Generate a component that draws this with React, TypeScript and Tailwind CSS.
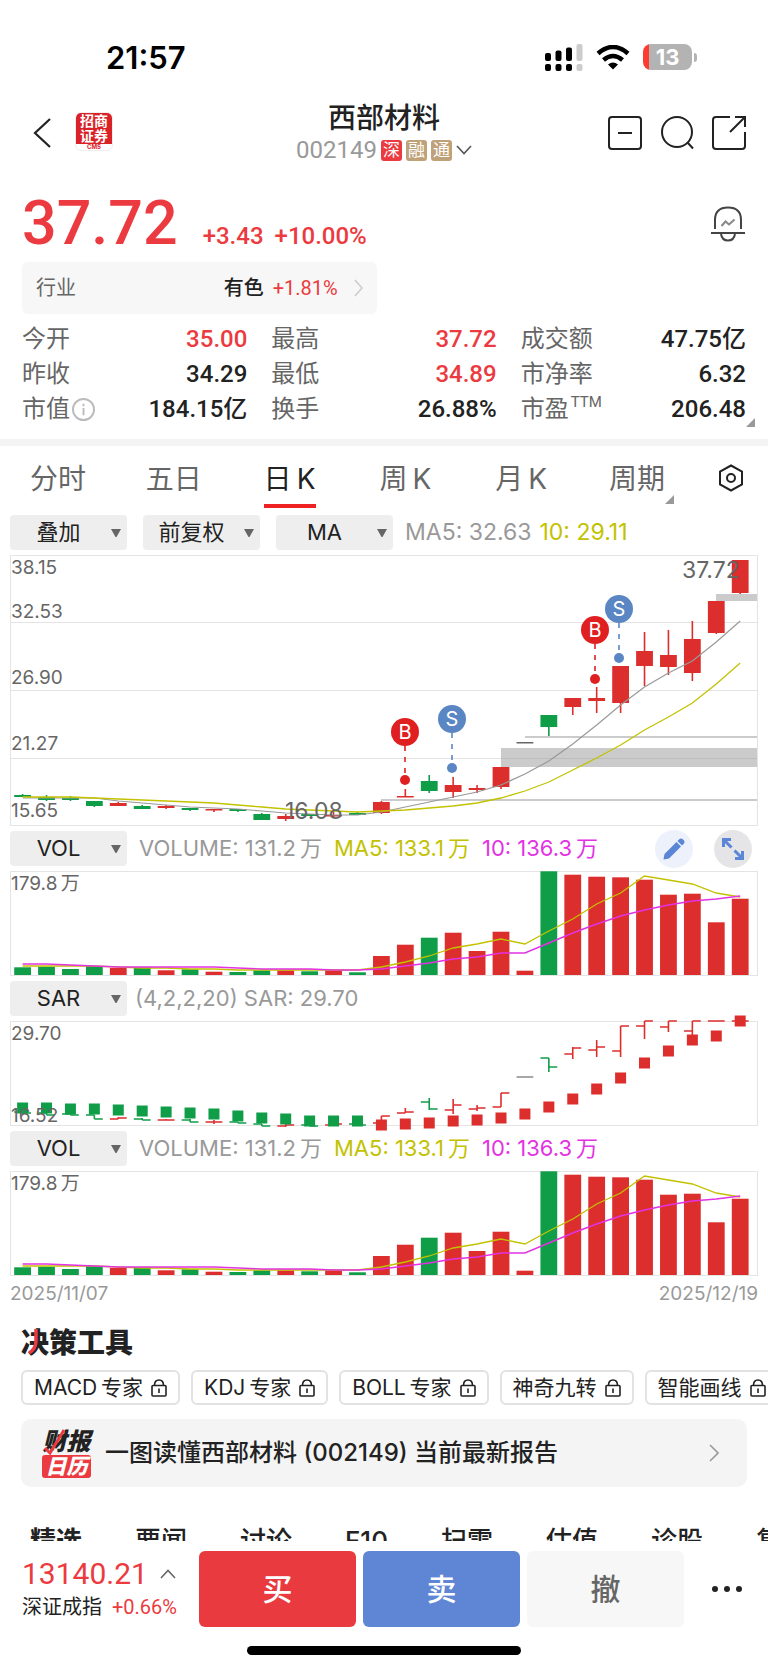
import { useState } from 'react';

const RED = '#dd2e2e';
const GREEN = '#0f9d48';
const GRAY = '#8a8a8a';
const OLIVE = '#c2c200';
const PURPLE = '#e332e3';

// x centre of the i-th trading day
const cx = (i: number) => 12.6 + i * 23.92;
const toPoints = (ys: number[]) => ys.map((y, i) => `${cx(i)},${y}`).join(' ');

// [up, high, bodyTop, bodyBottom, low]
const candles: [boolean, number, number, number, number][] = [
  [false, 239, 240, 242, 242],
  [false, 240, 242, 245, 246],
  [false, 241, 243, 245, 246],
  [false, 246, 246, 251, 252],
  [true, 247, 248, 251, 251],
  [false, 250, 251, 254, 254],
  [true, 250, 251, 253, 254],
  [false, 253, 253, 255, 256],
  [true, 254, 254, 255, 257],
  [false, 254, 254, 256, 257],
  [false, 258, 259, 265, 265],
  [true, 259, 261, 264, 266],
  [false, 259, 259, 261, 261],
  [true, 257, 260, 261, 262],
  [false, 257, 258, 260, 260],
  [true, 246, 247, 258, 259],
  [true, 234, 241, 242, 242],
  [false, 220, 226, 236, 238],
  [true, 222, 230, 237, 243],
  [true, 230, 233, 235, 238],
  [true, 212, 212, 232, 234],
  [true, 187, 187, 188, 188],
  [false, 160, 160, 172, 181],
  [true, 143, 143, 152, 160],
  [true, 132, 143, 146, 158],
  [true, 111, 111, 148, 158],
  [true, 77, 96, 111, 131],
  [true, 75, 100, 112, 120],
  [true, 66, 84, 118, 126],
  [true, 46, 46, 78, 79],
  [true, 5, 5, 38, 39],
];

const ma5 = [243, 243, 243, 243, 246, 248, 250, 252, 253, 254, 256, 258, 259, 260, 260, 257, 252, 247, 242, 237, 230, 219, 206, 189, 170, 150, 132, 118, 106, 87, 66];
const ma10 = [242, 242, 242, 243, 244, 245, 246, 247, 248, 250, 252, 254, 255, 256, 257, 256, 255, 253, 251, 248, 243, 236, 227, 215, 203, 190, 175, 162, 148, 129, 108];

const volumes = [7.7, 8.3, 6, 9, 7, 7.7, 4.7, 5.7, 3.3, 3, 4.7, 4.7, 3.7, 4.7, 2.7, 19, 30.3, 37.3, 42.3, 24, 43.3, 4.3, 103.7, 100.3, 98.3, 97.7, 95.3, 80.3, 81.3, 52.7, 76.3];
const vol5 = [95, 95, 95, 95, 96, 97, 97, 98, 98, 99, 99, 99, 99, 99, 99, 96, 91, 85, 77, 73, 68, 73, 60, 48, 33, 22, 5, 9, 13, 22, 26];
const vol10 = [93, 93, 94, 95, 96, 96, 96, 96, 96, 97, 98, 98, 98, 99, 99, 98, 95, 92, 88, 86, 82, 82, 72, 62, 53, 45, 39, 34, 30, 28, 25];

// [high, open, close, low]
const bars: [number, number, number, number][] = [
  [91, 91, 92, 93],
  [91, 92, 94, 94],
  [92, 93, 94, 94],
  [94, 94, 98, 98],
  [96, 98, 97, 98],
  [97, 98, 99, 99],
  [98, 99, 99, 99],
  [98, 99, 101, 101],
  [99, 101, 101, 103],
  [101, 101, 102, 102],
  [103, 103, 105, 105],
  [103, 105, 104, 106],
  [103, 104, 105, 105],
  [102, 104, 103, 105],
  [102, 103, 104, 104],
  [95, 102, 95, 102],
  [87, 92, 91, 92],
  [77, 81, 88, 89],
  [78, 89, 84, 93],
  [84, 88, 87, 90],
  [72, 86, 72, 86],
  [56, 56, 56, 56],
  [37, 37, 46, 51],
  [26, 33, 27, 38],
  [19, 29, 26, 36],
  [5, 30, 5, 36],
  [0, 5, 0, 18],
  [0, 6, 0, 11],
  [0, 10, 0, 17],
  [0, 0, 0, 0],
  [0, 0, 0, 0],
];
const sar = [87, 87, 88, 88, 89, 90, 91, 92, 93, 95, 97, 98, 100, 100, 100, 104, 103, 102, 100, 99, 97, 93, 86, 78, 68, 57, 42, 30, 19, 15, 0];

const markers = [
  { label: 'B', x: 395, y: 177, dot: 225, color: '#e02020' },
  { label: 'S', x: 442, y: 164, dot: 213, color: '#5b86c4' },
  { label: 'B', x: 585, y: 75, dot: 124, color: '#e02020' },
  { label: 'S', x: 609, y: 54, dot: 103, color: '#5b86c4' },
];

const Frame = ({ height }: { height: number }) => (
  <rect x="0.5" y="0.5" width="747" height={height - 1} fill="none" stroke="#e4e4e4" />
);

function CandleChart() {
  return (
    <svg viewBox="0 0 748 271" className="block w-full overflow-visible" role="img" aria-label="日K线">
      <Frame height={271} />
      {[67.5, 135.5, 203.5].map((y) => (
        <line key={y} x1="0" x2="748" y1={y} y2={y} stroke="#e4e4e4" />
      ))}
      <g fill="#cbcbcb">
        <rect x="371" y="244" width="376" height="2" />
        <rect x="491" y="193" width="256" height="19" />
        <rect x="515" y="181" width="232" height="2" />
        <rect x="706" y="39" width="41" height="7" />
      </g>
      <line x1="491" x2="747" y1="203.5" y2="203.5" stroke="#bdbdbd" />
      {candles.map(([up, high, top, bottom, low], i) => {
        const color = i === 21 ? '#666666' : up ? RED : GREEN;
        return (
          <g key={i} fill={color}>
            <rect x={cx(i) - 0.8} y={high} width="1.6" height={low - high} />
            <rect x={cx(i) - 8.4} y={top} width="16.8" height={Math.max(bottom - top, 1.5)} />
          </g>
        );
      })}
      <polyline points={toPoints(ma5)} fill="none" stroke="#999999" strokeWidth="1.2" />
      <polyline points={toPoints(ma10)} fill="none" stroke={OLIVE} strokeWidth="1.3" />
      {markers.map((m) => (
        <g key={m.x}>
          <line x1={m.x} x2={m.x} y1={m.y + 14} y2={m.dot} stroke={m.color} strokeWidth="1.6" strokeDasharray="5 6" />
          <circle cx={m.x} cy={m.y} r="14" fill={m.color} />
          <circle cx={m.x} cy={m.dot} r="5" fill={m.color} />
          <text x={m.x} y={m.y + 7} textAnchor="middle" className="text-[20px]" fill="#ffffff">{m.label}</text>
        </g>
      ))}
      <g fill="#666666" className="text-[19px]">
        <text x="1" y="19">38.15</text>
        <text x="1" y="63">32.53</text>
        <text x="1" y="129">26.90</text>
        <text x="1" y="195">21.27</text>
        <text x="1" y="262">15.65</text>
      </g>
      <g fill="#666666" className="text-[23px]">
        <text x="275" y="264">16.08</text>
        <text x="672" y="23">37.72</text>
      </g>
    </svg>
  );
}

function VolumeChart() {
  return (
    <svg viewBox="0 0 748 105" className="block w-full overflow-visible" role="img" aria-label="成交量">
      <Frame height={105} />
      {volumes.map((v, i) => (
        <rect key={i} x={cx(i) - 8.4} y={104 - v} width="16.8" height={v} fill={candles[i][0] ? RED : GREEN} />
      ))}
      <polyline points={toPoints(vol5)} fill="none" stroke={OLIVE} strokeWidth="1.3" />
      <polyline points={toPoints(vol10)} fill="none" stroke={PURPLE} strokeWidth="1.4" />
      <text x="1" y="19" fill="#666666" className="text-[19px]">179.8{'\u2009'}万</text>
    </svg>
  );
}

function SarChart() {
  return (
    <svg viewBox="0 0 748 105" className="block w-full overflow-visible" role="img" aria-label="SAR">
      <Frame height={105} />
      {bars.map(([high, open, close, low], i) => {
        const color = i === 21 ? GRAY : candles[i][0] ? RED : GREEN;
        const x = cx(i);
        return (
          <path
            key={i}
            d={`M${x - 8.4} ${open}H${x} M${x} ${high}V${low} M${x} ${close}H${x + 8.4}`}
            stroke={color}
            strokeWidth="1.6"
            fill="none"
          />
        );
      })}
      {sar.map((y, i) => (
        <rect key={i} x={cx(i) - 5.5} y={y - 5.5} width="11" height="11" fill={i < 15 ? GREEN : RED} />
      ))}
      <g fill="#666666" className="text-[19px]">
        <text x="1" y="19">29.70</text>
        <text x="1" y="101">16.52</text>
      </g>
    </svg>
  );
}

function Picker({ label, options }: { label: string; options: string[] }) {
  return (
    <div className="relative h-[35px] w-[117px] shrink-0">
      <select
        aria-label={label}
        className="h-full w-full appearance-none rounded-[4px] bg-[#eeeeee] pr-5 text-[22px] text-[#222222] outline-none [text-align-last:center]"
      >
        {options.map((o) => (
          <option key={o}>{o}</option>
        ))}
      </select>
      <svg viewBox="0 0 10 8" className="pointer-events-none absolute top-[14px] right-[6px] w-[10px]">
        <path d="M0 0H10L5.8 7.4Q5 8.4 4.2 7.4Z" fill="#666666" />
      </svg>
    </div>
  );
}

function VolumeHeader({ tools }: { tools?: boolean }) {
  return (
    <div className="flex h-[45px] items-center gap-3 text-[22px] whitespace-nowrap">
      <Picker label="指标" options={['VOL', 'MACD', 'KDJ', 'SAR']} />
      <span className="text-[#999999]">VOLUME: 131.2{'\u2009'}万</span>
      <span className="text-[#c2c200]">MA5: 133.1{'\u2009'}万</span>
      <span className="text-[#e332e3]">10: 136.3{'\u2009'}万</span>
      {tools && (
        <div className="mr-[6px] ml-auto flex gap-[21px]">
          <button aria-label="画线" className="flex size-[38px] items-center justify-center rounded-full bg-[#ecf1fb]">
            <svg viewBox="0 0 22 22" className="w-[22px]" fill="#5b85d6">
              <path d="M0.5 21.5L1.5 16L13.5 4L18 8.5L6 20.5Z" />
              <path d="M14.5 3L16.5 1Q18 0 19.5 1L21 2.5Q22 4 21 5.5L19 7.5Z" />
            </svg>
          </button>
          <button aria-label="全屏" className="flex size-[38px] items-center justify-center rounded-full bg-[#e5e5e7]">
            <svg viewBox="0 0 22 22" className="w-[22px]">
              <path d="M1.5 9V1.5H9M2.5 2.5L9.5 9.5M20.5 13V20.5H13M19.5 19.5L12.5 12.5" stroke="#5b85d6" strokeWidth="3" fill="none" />
            </svg>
          </button>
        </div>
      )}
    </div>
  );
}

function Corner() {
  return (
    <svg viewBox="0 0 9 9" className="absolute right-[-9px] bottom-0 w-[9px]">
      <path d="M9 0V9H0Z" fill="#999999" />
    </svg>
  );
}

function LockIcon() {
  return (
    <svg viewBox="0 0 16 18" className="w-4" fill="none" stroke="#222222" strokeWidth="1.6">
      <rect x="1" y="6.5" width="14" height="10.5" rx="1" />
      <path d="M3.5 6.5Q3.5 1 8 1T12.5 6.5M8 9.5V14" />
    </svg>
  );
}

const quotes = [
  { label: '今开', value: '35.00', up: true },
  { label: '最高', value: '37.72', up: true },
  { label: '成交额', value: '47.75亿' },
  { label: '昨收', value: '34.29' },
  { label: '最低', value: '34.89', up: true },
  { label: '市净率', value: '6.32' },
  { label: '市值', value: '184.15亿', info: true },
  { label: '换手', value: '26.88%' },
  { label: '市盈', value: '206.48', ttm: true },
];

const periods = ['分时', '五日', '日\u2009K', '周\u2009K', '月\u2009K', '周期'];
const experts = ['MACD\u2009专家', 'KDJ\u2009专家', 'BOLL\u2009专家', '神奇九转', '智能画线'];
const sections = ['精选', '要闻', '讨论', 'F10', '扫雷', '估值', '诊股', '复盘'];

export default function App() {
  const [period, setPeriod] = useState(periods[2]);

  return (
    <div className="w-full overflow-hidden bg-white font-['Inter','Noto_Sans_CJK_SC',sans-serif] text-[#222222]">
      {/* Status bar */}
      <div className="flex h-[78px] items-center justify-between pt-9 pr-[71px] pl-[106px]">
        <span className="text-[31px] leading-none font-semibold text-black">21:57</span>
        <div className="flex items-center gap-[13px]">
          <svg viewBox="0 0 38 27" className="w-[38px]">
            <rect x="0" y="9" width="6" height="8" rx="2" />
            <rect x="10.5" y="6.5" width="6" height="10.5" rx="2" />
            <rect x="21" y="3.5" width="6" height="13.5" rx="2" />
            <rect x="31.5" y="0" width="6" height="17" rx="2" fill="#cccccc" />
            <rect x="0" y="20" width="6" height="7" rx="2" />
            <rect x="10.5" y="20" width="6" height="7" rx="2" />
            <rect x="21" y="20" width="6" height="7" rx="2" />
            <rect x="31.5" y="20" width="6" height="7" rx="2" fill="#cccccc" />
          </svg>
          <svg viewBox="0 0 34 25" className="w-[34px]">
            <path d="M2 8.5Q17 -4.5 32 8.5M7.5 15Q17 7 26.5 15" fill="none" stroke="#000000" strokeWidth="4.5" />
            <path d="M12 19.5Q17 15.5 22 19.5L17 24.5Z" />
          </svg>
          <div className="flex items-center">
            <div className="flex h-[26px] w-[49px] items-center justify-center rounded-[8px] bg-linear-to-r from-[#ff3b30] from-13% to-[#b3b3b3] to-13% text-[22px] leading-none font-bold text-white">
              13
            </div>
            <div className="ml-[2px] h-[9px] w-[3px] rounded-r-full bg-[#b3b3b3]" />
          </div>
        </div>
      </div>

      {/* Title bar */}
      <header className="grid h-[110px] grid-cols-[1fr_auto_1fr] items-center px-[22px]">
        <div className="flex items-center gap-6 pl-[11px]">
          <button aria-label="返回">
            <svg viewBox="0 0 18 30" className="w-[18px]" fill="none" stroke="#222222" strokeWidth="2.2">
              <path d="M17 1L2 15L17 29" />
            </svg>
          </button>
          <div className="mb-1 flex h-[39px] w-[38px] flex-col items-center overflow-hidden rounded-[6px] border border-[#eeeeee] bg-white text-center">
            <div className="h-[31px] w-full bg-[#da2127] text-[14px] leading-[15px] font-bold text-white">
              招商
              <br />
              证券
            </div>
            <div className="text-[6px] leading-[6px] font-bold text-[#da2127]">CMS</div>
          </div>
        </div>
        <div className="flex flex-col items-center">
          <h1 className="pt-[2px] text-[28px] leading-[32px] font-medium">西部材料</h1>
          <button className="flex h-8 items-center gap-1">
            <span className="font-['Roboto',sans-serif] text-[24px] text-[#999999]">002149</span>
            <span className="rounded-[3px] bg-[#eb3b40] px-[2px] text-[17px] leading-[21px] text-white">深</span>
            <span className="rounded-[3px] bg-[#bfa279] px-[2px] text-[17px] leading-[21px] text-white">融</span>
            <span className="rounded-[3px] bg-[#bfa279] px-[2px] text-[17px] leading-[21px] text-white">通</span>
            <svg viewBox="0 0 16 10" className="w-4" fill="none" stroke="#555555" strokeWidth="1.6">
              <path d="M1 1L8 8.5L15 1" />
            </svg>
          </button>
        </div>
        <div className="flex items-center justify-end gap-[18px]">
          <button aria-label="减自选">
            <svg viewBox="0 0 34 34" className="w-[34px]" fill="none" stroke="#222222" strokeWidth="2">
              <rect x="1" y="1" width="32" height="32" rx="3" />
              <path d="M10 17H24" />
            </svg>
          </button>
          <button aria-label="搜索">
            <svg viewBox="0 0 34 34" className="w-[34px]" fill="none" stroke="#222222" strokeWidth="2">
              <circle cx="17" cy="16" r="15" />
              <path d="M27.5 26.5L33 32.5" />
            </svg>
          </button>
          <button aria-label="分享">
            <svg viewBox="0 0 34 34" className="w-[34px]" fill="none" stroke="#222222" strokeWidth="2">
              <path d="M18 1H4Q1 1 1 4V30Q1 33 4 33H30Q33 33 33 30V16M23 1H33V11M33 1L18 16" />
            </svg>
          </button>
        </div>
      </header>

      {/* Price */}
      <section className="px-[22px]">
        <div className="flex h-[74px] items-start justify-between">
          <div className="flex items-baseline font-['Roboto',sans-serif] font-medium text-[#eb3b40]">
            <span className="text-[61px] leading-[70px]">37.72</span>
            <span className="ml-[25px] text-[24px]">+3.43</span>
            <span className="ml-[11px] text-[24px]">+10.00%</span>
          </div>
          <button aria-label="预警" className="mt-[18px]">
            <svg viewBox="0 0 36 36" className="w-9" fill="none" stroke="#444444" strokeWidth="2">
              <path d="M5 23V14Q5 1.5 18 1.5T31 14V23M1 27H35M11 28Q12 34.5 18 34.5T25 28" />
              <path d="M11.5 20L15.5 15.5L19 18.5L24.5 13.5" stroke="#888888" />
            </svg>
          </button>
        </div>
        <a href="#industry" className="flex h-[52px] w-[49%] items-center rounded-[6px] bg-[#f7f7f7] px-[14px] text-[20px]">
          <span className="text-[#666666]">行业</span>
          <span className="mr-[9px] ml-auto font-medium">有色</span>
          <span className="mr-4 font-['Roboto',sans-serif] text-[#eb3b40]">+1.81%</span>
          <svg viewBox="0 0 9 18" className="w-[9px]" fill="none" stroke="#cccccc" strokeWidth="1.6">
            <path d="M1 1L8 9L1 17" />
          </svg>
        </a>
        <dl className="relative mt-2 grid grid-cols-3 gap-x-6 font-['Roboto','Noto_Sans_CJK_SC',sans-serif] text-[24px] leading-[35px] whitespace-nowrap">
          {quotes.map((q) => (
            <div key={q.label} className="flex h-[35px] items-center justify-between">
              <dt className="flex items-center text-[#666666]">
                {q.label}
                {q.info && (
                  <svg viewBox="0 0 24 24" className="ml-[2px] w-[23px]" fill="none" stroke="#bbbbbb" strokeWidth="2">
                    <circle cx="12" cy="12" r="11" />
                    <path d="M12 10.5V18M12 6V8.5" />
                  </svg>
                )}
                {q.ttm && <sup className="ml-[2px] text-[15px] leading-none">TTM</sup>}
              </dt>
              <dd className={q.up ? 'font-medium text-[#eb3b40]' : 'font-medium'}>{q.value}</dd>
            </div>
          ))}
          <Corner />
        </dl>
      </section>

      <div className="mt-3 h-[7px] bg-[#f4f4f4]" />

      {/* Period tabs */}
      <nav className="flex h-16 items-start text-[28px]">
        {periods.map((p) => (
          <div key={p} className="flex flex-1 justify-center">
            <button
              onClick={() => setPeriod(p)}
              className={
                p === period
                  ? 'relative h-[62px] border-b-4 border-[#ee2222] pt-2 text-[#222222]'
                  : 'relative h-[62px] border-b-4 border-transparent pt-2 text-[#666666]'
              }
            >
              {p}
              {p === '周期' && <Corner />}
            </button>
          </div>
        ))}
        <button aria-label="设置" className="mt-[18px] flex w-[73px] justify-center">
          <svg viewBox="0 0 26 28" className="w-[26px]" fill="none" stroke="#222222" strokeWidth="2">
            <path d="M13 1.5L24 7.5V20.5L13 26.5L2 20.5V7.5Z" />
            <circle cx="13" cy="14" r="4" />
          </svg>
        </button>
      </nav>

      {/* Charts */}
      <section className="px-[10px]">
        <div className="flex h-[45px] items-center gap-4 text-[23px] whitespace-nowrap">
          <Picker label="叠加" options={['叠加']} />
          <Picker label="复权" options={['前复权', '后复权', '不复权']} />
          <Picker label="主图指标" options={['MA', 'BOLL']} />
          <div className="-ml-1 flex gap-2">
            <span className="text-[#999999]">MA5: 32.63</span>
            <span className="text-[#c2c200]">10: 29.11</span>
          </div>
        </div>
        <CandleChart />
        <VolumeHeader tools />
        <VolumeChart />
        <div className="flex h-[45px] items-center gap-2 text-[22px] whitespace-nowrap">
          <Picker label="指标" options={['SAR', 'VOL', 'MACD']} />
          <span className="text-[#999999]">(4,2,2,20) SAR: 29.70</span>
        </div>
        <SarChart />
        <VolumeHeader />
        <VolumeChart />
        <div className="flex h-9 items-center justify-between text-[19px] text-[#999999]">
          <span>2025/11/07</span>
          <span>2025/12/19</span>
        </div>
      </section>

      {/* Tools */}
      <section className="pl-[21px]">
        <h2 className="relative flex h-[58px] items-center pt-1 text-[28px] font-black">
          决策工具
          <svg viewBox="0 0 12 26" className="absolute top-[17px] left-[7px] w-3" fill="none" stroke="#eb3b40" strokeWidth="3.5">
            <path d="M8 0V12Q8 20 1 24" />
          </svg>
        </h2>
        <div className="flex gap-[11px] overflow-hidden">
          {experts.map((e) => (
            <button
              key={e}
              className="flex h-[35px] shrink-0 items-center gap-2 rounded-[6px] border-2 border-[#e2e2e2] px-[11px] text-[21px] whitespace-nowrap"
            >
              {e}
              <LockIcon />
            </button>
          ))}
        </div>
        <a href="#report" className="mt-[14px] mr-[21px] flex h-[68px] items-center rounded-[10px] bg-[#f4f4f4] pr-7 pl-[21px]">
          <div className="relative flex w-[49px] flex-col items-center italic">
            <span className="text-[24px] leading-[26px] font-black">财报</span>
            <span className="w-full rounded-[3px] bg-[#eb3b40] text-center text-[21px] leading-[23px] font-black text-white">日历</span>
            <svg viewBox="0 0 24 26" className="absolute top-0 left-0 w-6" fill="none" stroke="#eb3b40" strokeWidth="3">
              <path d="M3 19L8 24L22 1" />
            </svg>
          </div>
          <span className="ml-[14px] text-[24px] font-medium whitespace-nowrap">一图读懂西部材料 (002149) 当前最新报告</span>
          <svg viewBox="0 0 10 18" className="ml-auto w-[10px]" fill="none" stroke="#999999" strokeWidth="1.6">
            <path d="M1 1L9 9L1 17" />
          </svg>
        </a>
      </section>

      {/* Section tabs, partly under the trade bar */}
      <nav className="mt-[27px] flex h-[27px] gap-[53px] overflow-hidden pl-[30px] text-[26px] leading-[54px] font-medium whitespace-nowrap">
        {sections.map((s, i) => (
          <a key={s} href="#news" className={i === 0 ? 'shrink-0 font-bold' : 'shrink-0'}>
            {s}
          </a>
        ))}
      </nav>

      {/* Trade bar */}
      <footer className="bg-white">
        <div className="flex h-[86px] items-center px-[22px] pt-[10px]">
          <div className="w-[177px] shrink-0">
            <button className="flex items-center gap-3 font-['Roboto',sans-serif] text-[30px] leading-[36px] text-[#eb3b40]">
              13140.21
              <svg viewBox="0 0 16 10" className="w-4" fill="none" stroke="#666666" strokeWidth="1.6">
                <path d="M1 9L8 1.5L15 9" />
              </svg>
            </button>
            <div className="flex gap-[10px] text-[20px] leading-[30px] whitespace-nowrap">
              <span>深证成指</span>
              <span className="font-['Roboto',sans-serif] text-[#eb3b40]">+0.66%</span>
            </div>
          </div>
          <div className="flex h-[76px] flex-1 gap-[7px] text-[30px] font-medium">
            <button className="flex-1 rounded-[6px] bg-[#e93a40] text-white">买</button>
            <button className="flex-1 rounded-[6px] bg-[#5f86d4] text-white">卖</button>
            <button className="flex-1 rounded-[6px] bg-[#f7f7f7] text-[#666666]">撤</button>
          </div>
          <button aria-label="更多" className="flex w-[62px] shrink-0 justify-end pr-[3px]">
            <svg viewBox="0 0 32 8" className="w-8" fill="#222222">
              <circle cx="4" cy="4" r="3" />
              <circle cx="16" cy="4" r="3" />
              <circle cx="28" cy="4" r="3" />
            </svg>
          </button>
        </div>
        <div className="pt-[19px] pb-[14px]">
          <div className="mx-auto h-[9px] w-[274px] rounded-full bg-black" />
        </div>
      </footer>
    </div>
  );
}
